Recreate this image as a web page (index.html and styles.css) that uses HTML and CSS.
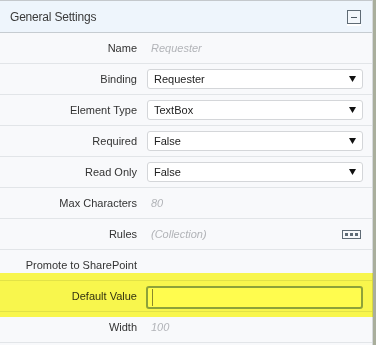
FILE: index.html
```html
<!DOCTYPE html>
<html>
<head>
<meta charset="utf-8">
<link rel="stylesheet" href="styles.css">
</head>
<body>
<div class="frame">
  <div class="panel">
    <div class="header">
      <span class="title">General Settings</span>
      <span class="collapse"><span class="minus"></span></span>
    </div>
    <div class="rows">
      <div class="row"><div class="label">Name</div><div class="value placeholder">Requester</div></div>
      <div class="row"><div class="label">Binding</div><div class="value"><div class="select"><span>Requester</span><svg class="arrow" width="7" height="6" viewBox="0 0 7 6"><polygon points="0,0 7,0 3.5,6" fill="#111"/></svg></div></div></div>
      <div class="row"><div class="label">Element Type</div><div class="value"><div class="select"><span>TextBox</span><svg class="arrow" width="7" height="6" viewBox="0 0 7 6"><polygon points="0,0 7,0 3.5,6" fill="#111"/></svg></div></div></div>
      <div class="row"><div class="label">Required</div><div class="value"><div class="select"><span>False</span><svg class="arrow" width="7" height="6" viewBox="0 0 7 6"><polygon points="0,0 7,0 3.5,6" fill="#111"/></svg></div></div></div>
      <div class="row"><div class="label">Read Only</div><div class="value"><div class="select"><span>False</span><svg class="arrow" width="7" height="6" viewBox="0 0 7 6"><polygon points="0,0 7,0 3.5,6" fill="#111"/></svg></div></div></div>
      <div class="row"><div class="label">Max Characters</div><div class="value placeholder">80</div></div>
      <div class="row"><div class="label">Rules</div><div class="value placeholder split"><span>(Collection)</span><span class="ellipsis"><i></i><i></i><i></i></span></div></div>
      <div class="row"><div class="label">Promote to SharePoint</div><div class="value"></div></div>
      <div class="row"><div class="label">Default Value</div><div class="value"><div class="input"><span class="caret"></span></div></div></div>
      <div class="row"><div class="label">Width</div><div class="value placeholder">100</div></div>
    </div>
    <div class="highlight"></div>
  </div>
  <div class="strip"></div>
</div>
</body>
</html>
```

FILE: styles.css
```css
html, body {
  margin: 0;
  padding: 0;
  background: #f8f9fb;
}
body {
  font-family: "Liberation Sans", Arial, sans-serif;
  font-size: 11px;
  color: #333;
}
.frame {
  display: flex;
  width: 376px;
  height: 345px;
  overflow: hidden;
}
.panel {
  position: relative;
  width: 372px;
  border-top: 1px solid #c4c8cc;
  border-right: 1px solid #d6d9dc;
  background: #f8f9fb;
}
.strip {
  flex: 1;
  background: #a9ae9c;
}
.header {
  height: 31px;
  background: #eef5fc;
  border-bottom: 1px solid #c6ccd1;
  display: flex;
  align-items: center;
  justify-content: space-between;
  padding: 0 11px 0 10px;
}
.title {
  font-size: 12px;
  letter-spacing: -0.2px;
  color: #3a3a3a;
}
.collapse {
  width: 12px;
  height: 12px;
  border: 1px solid #5f6b75;
  background: #f3f7fb;
  box-shadow: 0 2px 0 #ffffff;
  display: flex;
  align-items: center;
  justify-content: center;
  margin-top: 1px;
}
.minus {
  width: 6px;
  height: 1px;
  background: #4c5862;
}
.row {
  height: 30px;
  border-bottom: 1px solid #e2e5e8;
  display: grid;
  grid-template-columns: 137px 216px;
  column-gap: 10px;
  align-items: center;
}
.label {
  text-align: right;
  color: #333;
  white-space: nowrap;
}
.value {
  display: flex;
  align-items: center;
}
.placeholder {
  font-style: italic;
  color: #b2b4b8;
  padding-left: 4px;
}
.split {
  justify-content: space-between;
  padding-right: 2px;
}
.select {
  box-sizing: border-box;
  width: 216px;
  height: 20px;
  background: #fff;
  border: 1px solid #d4d6d9;
  border-radius: 3px;
  display: flex;
  align-items: center;
  justify-content: space-between;
  padding: 0 6px 0 6px;
  color: #222;
}
.arrow {
  display: block;
}
.ellipsis {
  box-sizing: border-box;
  width: 19px;
  height: 9px;
  border: 1px solid #5f6b75;
  display: flex;
  align-items: center;
  justify-content: center;
  gap: 2px;
}
.ellipsis i {
  display: block;
  width: 3px;
  height: 3px;
  background: #5f6b75;
}
.input {
  box-sizing: border-box;
  width: 218px;
  height: 23px;
  margin-left: -1px;
  margin-top: 2px;
  border: 2px solid #8ea4b8;
  border-radius: 3px;
  background: #ffffff;
  display: flex;
  align-items: center;
  padding-left: 4px;
}
.caret {
  width: 1px;
  height: 17px;
  background: #8a8a8a;
}
.highlight {
  position: absolute;
  left: 0;
  top: 272px;
  width: 373px;
  height: 44px;
  background: #fffc4e;
  mix-blend-mode: multiply;
  pointer-events: none;
}
```
